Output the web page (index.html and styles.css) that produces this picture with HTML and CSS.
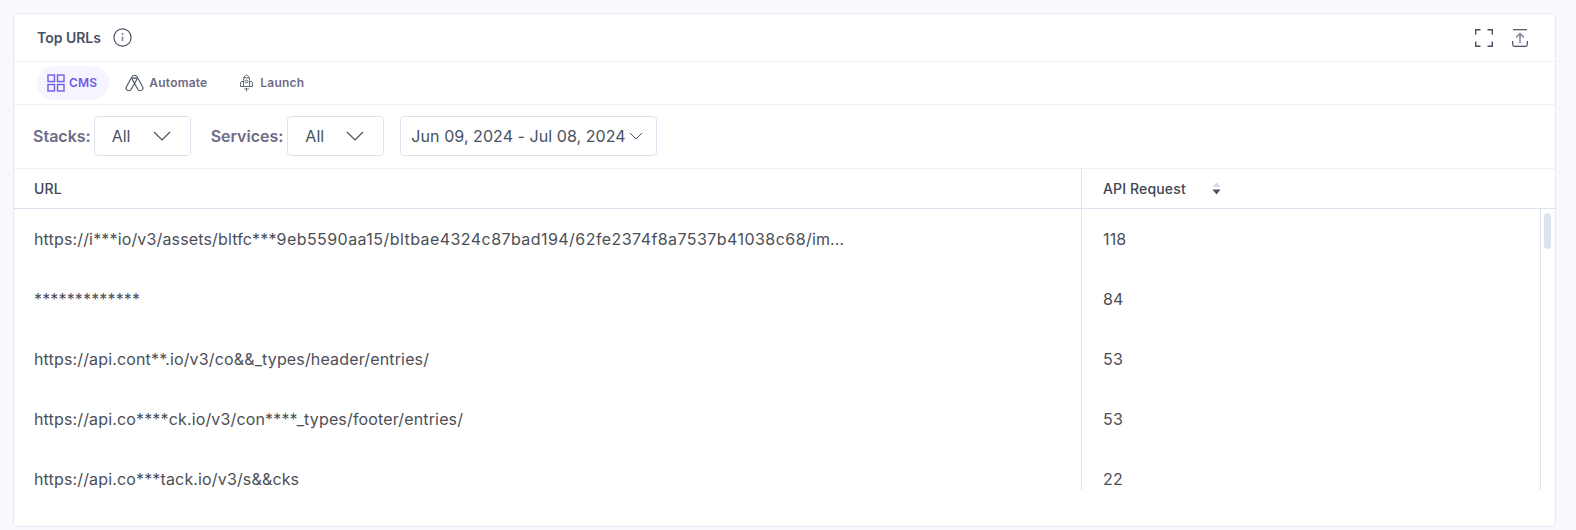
FILE: index.html
```html
<!DOCTYPE html>
<html lang="en">
<head>
    <meta charset="UTF-8">
    <meta name="viewport" content="width=device-width, initial-scale=1.0">
    <title>Top URLs</title>
    <link rel="stylesheet" href="styles.css">
</head>
<body>
    <div class="card">
        <div class="card-header">
            <div class="card-title">
                <span>Top URLs</span>
                <svg class="info-icon" width="19" height="19" viewBox="0 0 19 19" fill="none" stroke="#475161" stroke-width="1.2">
                    <circle cx="9.500" cy="9.500" r="8.600"/>
                    <path d="M9.500 8.500v4.500" stroke="#7f7b94" stroke-width="1.500"/>
                    <circle cx="9.500" cy="6" r="0.400" stroke="#7f7b94"/>
                </svg>
            </div>
            <div class="card-actions">
                <svg width="18" height="18" viewBox="0 0 18 18" fill="none" stroke="#475161" stroke-width="1.400">
                    <path d="M.7 5.500V.7H5.500M12.500 .7H17.300V5.500M17.300 12.500V17.300H12.500M5.500 17.300H.7V12.500"/>
                </svg>
                <svg width="16" height="18" viewBox="0 0 16 18" fill="none" stroke="#475161" stroke-width="1.200">
                    <path d="M1 .7H15"/>
                    <path d="M8 14V4.500M4 8.500L8 4.500L12 8.500" stroke="#7a8496" stroke-width="1.500"/>
                    <path d="M.7 12V15.500C.7 16.700 1.300 17.300 2.500 17.300H13.500C14.700 17.300 15.300 16.700 15.300 15.500V12"/>
                </svg>
            </div>
        </div>

        <div class="tabs">
            <div class="tab active">
                <svg width="18" height="18" viewBox="0 0 18 18" fill="none" stroke="#6c5ce7" stroke-width="1.400">
                    <rect x="1" y="1" width="6.500" height="6.500"/>
                    <rect x="10.500" y="1" width="6.500" height="6.500"/>
                    <rect x="1" y="10.500" width="6.500" height="6.500"/>
                    <rect x="10.500" y="10.500" width="6.500" height="6.500"/>
                </svg>
                <span>CMS</span>
            </div>
            <div class="tab automate">
                <svg width="19" height="18" viewBox="0 0 19 18" fill="none" stroke="#475161" stroke-width="1.100" stroke-linejoin="round">
                    <path d="M1.300 13L6.800 3C8 .6 11 .6 12.200 3L17.700 13C19 16 15 18.200 13 15.500L9.500 9.500L6 15.500C4 18.200 0 16 1.300 13Z"/>
                    <path d="M9.500 9.500L12 5C11 3.500 8 3.500 7 5L9.500 9.500"/>
                </svg>
                <span>Automate</span>
            </div>
            <div class="tab rocket">
                <svg width="13" height="18" viewBox="0 0 13 18" fill="none" stroke="#5f6674" stroke-width="1">
                    <path d="M6.500 .7C4.500 1.800 3.500 4 3.500 6.500V12.500H9.500V6.500C9.500 4 8.500 1.800 6.500 .7Z"/>
                    <path d="M3.500 3.800H9.500"/>
                    <circle cx="6.500" cy="7.500" r="1.400"/>
                    <path d="M3.500 7.500H1.800C1 7.500 .6 8 .6 8.800V12.500H3.500M9.500 7.500H11.200C12 7.500 12.400 8 12.400 8.800V12.500H9.500"/>
                    <path d="M5 14V15.500M6.500 14V17.500M8 14V15.500"/>
                </svg>
                <span>Launch</span>
            </div>
        </div>

        <div class="filters">
            <label class="filter-label">Stacks:</label>
            <div class="select">
                <span>All</span>
                <svg width="18" height="10" viewBox="0 0 18 10" fill="none" stroke="#475161" stroke-width="1.200"><path d="M1 1L9 9L17 1"/></svg>
            </div>
            <label class="filter-label second">Services:</label>
            <div class="select">
                <span>All</span>
                <svg width="18" height="10" viewBox="0 0 18 10" fill="none" stroke="#475161" stroke-width="1.200"><path d="M1 1L9 9L17 1"/></svg>
            </div>
            <div class="date-select">
                <span>Jun 09, 2024 - Jul 08, 2024</span>
                <svg width="14" height="8" viewBox="0 0 14 8" fill="none" stroke="#475161" stroke-width="1"><path d="M1 1L7 7L13 1"/></svg>
            </div>
        </div>

        <div class="table-head">
            <div class="col-url">URL</div>
            <div class="col-api">
                <span>API Request</span>
                <svg width="9" height="13" viewBox="0 0 9 13"><path d="M4.500 0L8.500 5H.5Z" fill="#d5dbe8"/><path d="M.5 7.500H8.500L4.500 12.500Z" fill="#475161"/></svg>
            </div>
        </div>

        <div class="table-wrap">
            <div class="rows">
                <div class="row">
                    <div class="col-url"><span>https://i***io/v3/assets/bltfc***<span class="hash">9eb5590aa15/bltbae4324c87bad194/62fe2374f8a7537b41038c68</span>/im...</span></div>
                    <div class="col-api">118</div>
                </div>
                <div class="row">
                    <div class="col-url">*************</div>
                    <div class="col-api">84</div>
                </div>
                <div class="row">
                    <div class="col-url">https://api.cont**.io/v3/co&amp;&amp;_types/header/entries/</div>
                    <div class="col-api">53</div>
                </div>
                <div class="row">
                    <div class="col-url">https://api.co****ck.io/v3/con****_types/footer/entries/</div>
                    <div class="col-api">53</div>
                </div>
                <div class="row">
                    <div class="col-url">https://api.co***tack.io/v3/s&amp;&amp;cks</div>
                    <div class="col-api">22</div>
                </div>
            </div>
            <div class="scroll-track">
                <div class="scroll-thumb"></div>
            </div>
        </div>
    </div>
</body>
</html>
```

FILE: styles.css
```css
* {
    box-sizing: border-box;
}
body {
    font-family: Inter, "Liberation Sans", sans-serif;
    margin: 0;
    padding: 13px 20px 3px 13px;
    height: 530px;
    overflow: hidden;
    background-color: #f7f9fd;
    color: #3f4654;
}
.card {
    height: 514px;
    background-color: #fff;
    border: 1px solid #e6e9f4;
    border-radius: 4px;
}
.card-header {
    display: flex;
    justify-content: space-between;
    align-items: center;
    height: 48px;
    padding: 0 27px 0 23px;
    border-bottom: 1px solid #eef0f7;
}
.card-title {
    display: flex;
    align-items: center;
    gap: 12px;
    font-size: 14px;
    font-weight: 600;
    color: #475161;
}
.card-actions {
    display: flex;
    align-items: center;
    gap: 19px;
}
.tabs {
    display: flex;
    align-items: center;
    height: 43px;
    padding: 0 23px;
    border-bottom: 1px solid #eef0f7;
}
.tab {
    display: flex;
    align-items: center;
    gap: 4px;
    height: 34px;
    padding: 0 12px 1px 10px;
    margin-right: 5px;
    border-radius: 17px;
    font-size: 12px;
    font-weight: 600;
    letter-spacing: .2px;
    color: #6e6b86;
}
.tab.active {
    background-color: #f6f4ff;
    color: #6c5ce7;
    margin-right: 6px;
}
.tab.automate {
    gap: 5px;
}
.tab.rocket {
    gap: 7px;
    padding-left: 16px;
}
.filters {
    display: flex;
    align-items: center;
    height: 64px;
    padding: 0 19px 1px;
    border-bottom: 1px solid #eef0f7;
}
.filter-label {
    font-size: 16px;
    font-weight: 600;
    color: #6e6b86;
    margin-right: 3px;
}
.filter-label.second {
    margin-left: 20px;
    margin-right: 4px;
}
.select {
    display: flex;
    align-items: center;
    justify-content: space-between;
    width: 97px;
    height: 40px;
    padding: 0 19px 0 17px;
    border: 1px solid #dde3ee;
    border-radius: 4px;
    font-size: 16px;
    color: #475161;
}
.date-select {
    display: flex;
    align-items: center;
    gap: 3px;
    width: 257px;
    height: 40px;
    margin-left: 16px;
    padding-left: 10px;
    border: 1px solid #dde3ee;
    border-radius: 4px;
    font-size: 16px;
    letter-spacing: .06px;
    color: #475161;
}
.table-head {
    display: flex;
    height: 40px;
    border-bottom: 1px solid #dde3ee;
    font-size: 14px;
    font-weight: 500;
    letter-spacing: .15px;
    color: #3f4654;
}
.col-url {
    display: flex;
    align-items: center;
    width: 1068px;
    padding-left: 20px;
    border-right: 1px solid #dde3ee;
}
.col-api {
    display: flex;
    align-items: center;
    padding-left: 21px;
    gap: 26px;
}
.table-wrap {
    display: flex;
    height: 281px;
    overflow: hidden;
}
.rows {
    width: 1527px;
    height: 281px;
    overflow: hidden;
    border-right: 1px solid #dde3ee;
    font-size: 16px;
    letter-spacing: .15px;
    color: #4c4f57;
}
.hash {
    letter-spacing: .44px;
}
.row {
    display: flex;
    height: 60px;
}
.scroll-track {
    padding: 4px 0 0 3px;
}
.scroll-thumb {
    width: 7px;
    height: 36px;
    border-radius: 4px;
    background-color: #dde3ee;
}
```
